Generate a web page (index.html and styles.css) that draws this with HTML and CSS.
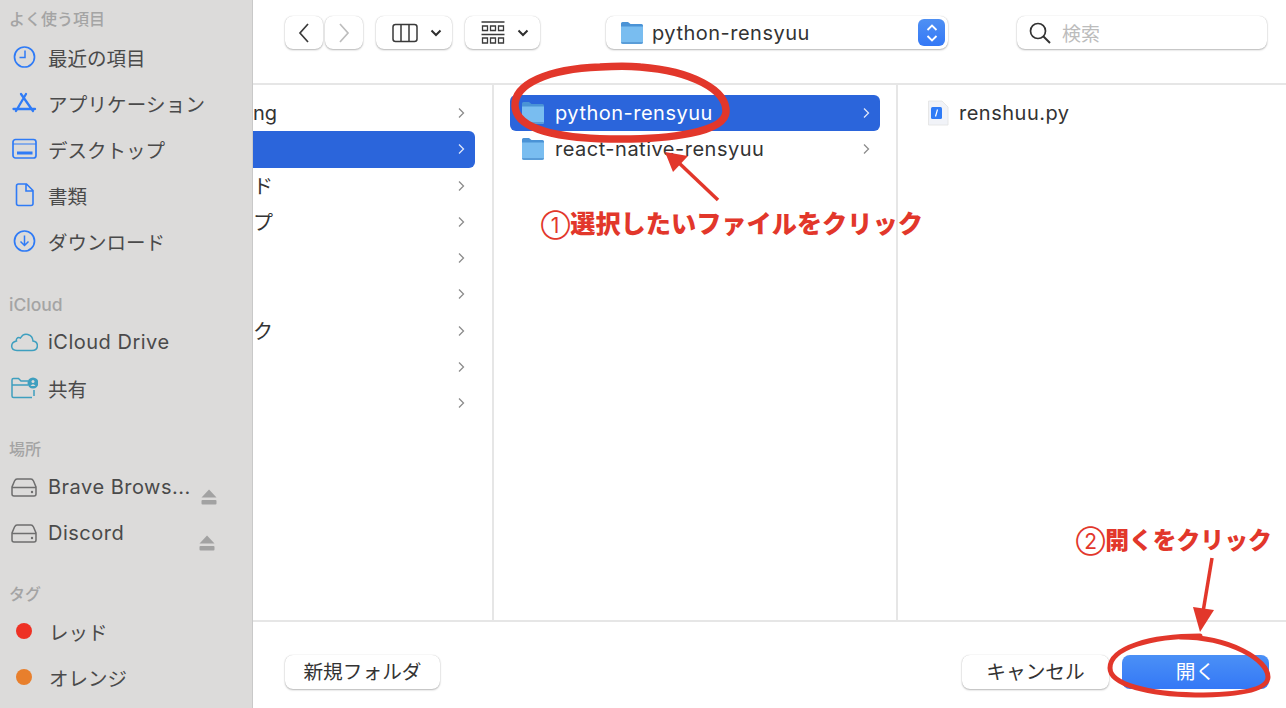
FILE: index.html
```html
<!DOCTYPE html>
<html lang="ja">

<head>
    <meta charset="UTF-8">
    <title>python-rensyuu</title>
    <link rel="stylesheet" href="styles.css">
</head>

<body>
    <svg class="icon-defs" width="0" height="0">
        <defs>
            <symbol id="folder" viewBox="0 0 24 24">
                <path d="M1 2.500 Q1 1 2.500 1 H8 L10.500 3 H21.500 Q23 3 23 4.500 V8 H1 Z" fill="#4a93d6" />
                <path d="M1 5.500 H23 V21 Q23 23 21 23 H3 Q1 23 1 21 Z" fill="#79bdf0" />
                <path d="M1 21 H23 Q23 23 21 23 H3 Q1 23 1 21 Z" fill="#5a9dd8" />
            </symbol>
            <symbol id="chevron" viewBox="0 0 10 14">
                <path d="M3 2.500 L7.500 7 L3 11.500" fill="none" stroke="currentColor" stroke-width="1.300" />
            </symbol>
            <symbol id="drive" viewBox="0 0 28 24">
                <path d="M7 4 H21 Q22.500 4 23.500 6 L26 12 V19 Q26 21 24 21 H4 Q2 21 2 19 V12 L4.500 6 Q5.500 4 7 4 Z M2 12.500 H26" fill="none" stroke="#6e6e6e" stroke-width="1.500" />
                <circle cx="22" cy="17" r="1.200" fill="#6e6e6e" />
            </symbol>
            <symbol id="eject" viewBox="0 0 16 16">
                <path d="M8 0.500 L15.500 8.500 H0.500 Z" fill="#a2a2a2" />
                <rect x="0.500" y="11" width="15" height="4.500" rx="1" fill="#a2a2a2" />
            </symbol>
        </defs>
    </svg>

    <div class="dialog">
        <aside class="sidebar">
            <section class="side-section side-favorites">
                <h2 class="side-title">よく使う項目</h2>
                <div class="side-item">
                    <svg class="side-icon" viewBox="0 0 28 24">
                        <circle cx="14.500" cy="12" r="10" fill="none" stroke="#2f7bf6" stroke-width="1.700" />
                        <path d="M15 5.500 V12.500 H9.500" fill="none" stroke="#2f7bf6" stroke-width="1.500" />
                    </svg>
                    <span>最近の項目</span>
                </div>
                <div class="side-item">
                    <svg class="side-icon" viewBox="0 0 28 24">
                        <path d="M16 3 L6 20 M11 3 L23 20 M3.500 18 H25" fill="none" stroke="#2f7bf6" stroke-width="2.300" stroke-linecap="round" />
                    </svg>
                    <span class="side-kana">アプリケーション</span>
                </div>
                <div class="side-item">
                    <svg class="side-icon" viewBox="0 0 28 24">
                        <rect x="3" y="2.500" width="23" height="18.500" rx="2.500" fill="none" stroke="#2f7bf6" stroke-width="1.700" />
                        <path d="M3 7 H26" stroke="#2f7bf6" stroke-width="1" />
                        <rect x="7" y="14.500" width="15.500" height="3" fill="#2f7bf6" />
                    </svg>
                    <span>デスクトップ</span>
                </div>
                <div class="side-item">
                    <svg class="side-icon" viewBox="0 0 28 24">
                        <path d="M8.500 1 H16.500 L23 7.500 V20.500 Q23 22.500 21 22.500 H8.500 Q6.500 22.500 6.500 20.500 V3 Q6.500 1 8.500 1 Z M16 1 V8 H23" fill="none" stroke="#2f7bf6" stroke-width="1.600" />
                    </svg>
                    <span>書類</span>
                </div>
                <div class="side-item">
                    <svg class="side-icon" viewBox="0 0 28 24">
                        <circle cx="14.500" cy="12" r="10" fill="none" stroke="#2f7bf6" stroke-width="1.700" />
                        <path d="M14.500 6.500 V16.500 M10.500 12.500 L14.500 16.500 L18.500 12.500" fill="none" stroke="#2f7bf6" stroke-width="1.500" />
                    </svg>
                    <span>ダウンロード</span>
                </div>
            </section>

            <section class="side-section side-tight">
                <h2 class="side-title title-latin">iCloud</h2>
                <div class="side-item">
                    <svg class="side-icon" viewBox="0 0 28 24">
                        <path d="M7 20.500 H22 C29 20.500 29 12 23 11 C22.500 4 14 1.500 10.500 8 C7 6.500 6 9.500 6.500 11 C0 12.500 0 20.500 7 20.500 Z" fill="none" stroke="#3e9fbf" stroke-width="1.500" />
                    </svg>
                    <span class="latin">iCloud Drive</span>
                </div>
                <div class="side-item">
                    <svg class="side-icon" viewBox="0 0 28 24">
                        <path d="M22 21.500 H3.500 Q2 21.500 2 20 V4 Q2 2.500 3.500 2.500 H8.500 L11 5 H18 M2 9 H18 M24 14 V20" fill="none" stroke="#3e9fbf" stroke-width="1.500" />
                        <circle cx="23" cy="7" r="5.500" fill="#3e9fbf" />
                        <circle cx="23" cy="5.500" r="1.500" fill="#dcdbda" />
                        <path d="M20.500 10 Q23 6.500 25.500 10 Z" fill="#dcdbda" />
                    </svg>
                    <span>共有</span>
                </div>
            </section>

            <section class="side-section">
                <h2 class="side-title">場所</h2>
                <div class="side-item">
                    <svg class="side-icon"><use href="#drive" /></svg>
                    <span class="latin">Brave Brows...</span>
                    <svg class="eject"><use href="#eject" /></svg>
                </div>
                <div class="side-item">
                    <svg class="side-icon"><use href="#drive" /></svg>
                    <span class="latin">Discord</span>
                    <svg class="eject"><use href="#eject" /></svg>
                </div>
            </section>

            <section class="side-section side-tight">
                <h2 class="side-title">タグ</h2>
                <div class="side-item">
                    <span class="tag-dot tag-red"></span>
                    <span>レッド</span>
                </div>
                <div class="side-item">
                    <span class="tag-dot tag-orange"></span>
                    <span>オレンジ</span>
                </div>
            </section>
        </aside>

        <main class="main">
            <div class="toolbar">
                <div class="nav-buttons">
                    <button class="tool-btn nav-btn">
                        <svg width="14" height="24" viewBox="0 0 14 24"><path d="M11 3 L3 12 L11 21" fill="none" stroke="#3a3a3a" stroke-width="1.700" /></svg>
                    </button>
                    <button class="tool-btn nav-btn">
                        <svg width="14" height="24" viewBox="0 0 14 24"><path d="M3 3 L11 12 L3 21" fill="none" stroke="#bdbdbd" stroke-width="1.700" /></svg>
                    </button>
                </div>
                <button class="tool-btn view-btn view-columns">
                    <svg width="26" height="20" viewBox="0 0 26 20">
                        <rect x="1" y="1.500" width="24" height="17" rx="2.500" fill="none" stroke="#3a3a3a" stroke-width="1.500" />
                        <path d="M9 1.500 V18.500 M17 1.500 V18.500" stroke="#3a3a3a" stroke-width="1.500" />
                    </svg>
                    <svg class="caret" width="12" height="8" viewBox="0 0 12 8"><path d="M1.500 1.500 L6 6 L10.500 1.500" fill="none" stroke="#2e2e2e" stroke-width="2" /></svg>
                </button>
                <button class="tool-btn view-btn view-group">
                    <svg width="24" height="23" viewBox="0 0 24 23">
                        <path d="M0.500 1 H23.500 M0.500 13.500 H23.500" stroke="#3a3a3a" stroke-width="1.300" />
                        <path d="M1.500 5 h5 v4.500 h-5 Z M9.500 5 h5 v4.500 h-5 Z M17.500 5 h5 v4.500 h-5 Z M1.500 17 h5 v5 h-5 Z M9.500 17 h5 v5 h-5 Z M17.500 17 h5 v5 h-5 Z" fill="none" stroke="#3a3a3a" stroke-width="1.300" />
                    </svg>
                    <svg class="caret" width="12" height="8" viewBox="0 0 12 8"><path d="M1.500 1.500 L6 6 L10.500 1.500" fill="none" stroke="#2e2e2e" stroke-width="2" /></svg>
                </button>
                <div class="tool-btn path-popup">
                    <svg class="row-icon"><use href="#folder" /></svg>
                    <span class="path-name">python-rensyuu</span>
                    <span class="stepper">
                        <svg width="14" height="24" viewBox="0 0 14 24">
                            <path d="M2.500 9 L7 4.500 L11.500 9 M2.500 15 L7 19.500 L11.500 15" fill="none" stroke="#fff" stroke-width="1.800" />
                        </svg>
                    </span>
                </div>
                <div class="tool-btn search-box">
                    <svg width="24" height="24" viewBox="0 0 24 24">
                        <circle cx="10" cy="10" r="7.500" fill="none" stroke="#333" stroke-width="1.700" />
                        <path d="M15.500 15.500 L22 22" stroke="#333" stroke-width="2" />
                    </svg>
                    <span>検索</span>
                </div>
            </div>

            <div class="browser">
                <div class="column column-first">
                    <div class="row"><span class="row-label">ng</span><svg class="chevron"><use href="#chevron" /></svg></div>
                    <div class="row row-selected"><span class="row-label"></span><svg class="chevron"><use href="#chevron" /></svg></div>
                    <div class="row"><span class="row-label">ド</span><svg class="chevron"><use href="#chevron" /></svg></div>
                    <div class="row"><span class="row-label">プ</span><svg class="chevron"><use href="#chevron" /></svg></div>
                    <div class="row"><span class="row-label"></span><svg class="chevron"><use href="#chevron" /></svg></div>
                    <div class="row"><span class="row-label"></span><svg class="chevron"><use href="#chevron" /></svg></div>
                    <div class="row"><span class="row-label">ク</span><svg class="chevron"><use href="#chevron" /></svg></div>
                    <div class="row"><span class="row-label"></span><svg class="chevron"><use href="#chevron" /></svg></div>
                    <div class="row"><span class="row-label"></span><svg class="chevron"><use href="#chevron" /></svg></div>
                </div>
                <div class="column column-second">
                    <div class="row row-selected">
                        <svg class="row-icon"><use href="#folder" /></svg>
                        <span class="row-label latin">python-rensyuu</span>
                        <svg class="chevron"><use href="#chevron" /></svg>
                    </div>
                    <div class="row">
                        <svg class="row-icon"><use href="#folder" /></svg>
                        <span class="row-label latin">react-native-rensyuu</span>
                        <svg class="chevron"><use href="#chevron" /></svg>
                    </div>
                </div>
                <div class="column column-third">
                    <div class="row">
                        <svg class="file-icon" width="22" height="26" viewBox="0 0 22 26">
                            <path d="M1.500 1 H15 L21 7 V25 H1.500 Z" fill="#f1f3f8" stroke="#e2e2e2" stroke-width="0.800" />
                            <rect x="4" y="7" width="11" height="12" rx="1.500" fill="#2f7bf6" />
                            <path d="M10.500 9.500 L8.500 16.500" stroke="#fff" stroke-width="1.200" />
                        </svg>
                        <span class="row-label latin">renshuu.py</span>
                    </div>
                </div>
            </div>

            <div class="footer">
                <button class="tool-btn foot-btn new-folder">新規フォルダ</button>
                <div class="foot-right">
                    <button class="tool-btn foot-btn">キャンセル</button>
                    <button class="foot-btn open-btn">開く</button>
                </div>
            </div>
        </main>
    </div>

    <!-- red notes drawn over the dialog -->
    <svg class="marks" viewBox="0 0 1286 708">
        <path d="M640 67 C692 71 727 90 726 112 C725 132 670 140 610 139 C560 138 516 130 515 106 C514 84 548 69 600 67 C615 66 630 66 640 67" fill="none" stroke="#e2372b" stroke-width="7.500" stroke-linecap="round" />
        <path d="M718 200 L678 162" fill="none" stroke="#e2372b" stroke-width="3.500" />
        <path d="M665 152 L688 156 L673 172 Z" fill="#e2372b" />
        <path d="M1180 637 C1230 637 1268 660 1268 677 C1268 692 1230 695 1195 695 C1150 694 1110 685 1110 668 C1110 648 1150 636 1200 636" fill="none" stroke="#e2372b" stroke-width="5" stroke-linecap="round" />
        <path d="M1212 558 L1203 612" fill="none" stroke="#e2372b" stroke-width="3.500" />
        <path d="M1200 632 L1193 607 L1214 610 Z" fill="#e2372b" />
    </svg>
    <div class="note note-first"><span class="note-num">①</span>選択したいファイルをクリック</div>
    <div class="note note-second"><span class="note-num">②</span>開くをクリック</div>
</body>

</html>
```

FILE: styles.css
```css
* {
    box-sizing: border-box;
}

html,
body {
    margin: 0;
    height: 708px;
    overflow: hidden;
}

body {
    position: relative;
    font-family: Inter, "Noto Sans CJK JP", sans-serif;
    background-color: #fff;
    color: #333;
}

.icon-defs {
    position: absolute;
}

.latin {
    font-size: 20px;
    letter-spacing: 0.5px;
}

.dialog {
    display: flex;
    height: 708px;
}

/* sidebar */
.sidebar {
    flex: 0 0 253px;
    padding-top: 5px;
    background-color: #dcdbda;
    border-right: 1px solid #c9c9c9;
    overflow: hidden;
}

.side-section {
    margin-bottom: 24px;
}

.side-favorites {
    margin-bottom: 27px;
}

.side-title {
    margin: 0 0 1px 9px;
    height: 28px;
    line-height: 28px;
    font-size: 16px;
    font-weight: 500;
    color: #a4a4a4;
}

.title-latin {
    font-size: 17.5px;
}

.side-tight .side-title {
    margin-bottom: 0;
}

.side-item {
    display: flex;
    align-items: center;
    gap: 10px;
    height: 46px;
    padding: 0 37px 0 10px;
    font-size: 19.5px;
    color: #4a4a4a;
    white-space: nowrap;
}

.side-kana {
    letter-spacing: 0.2px;
}

.side-icon {
    flex: 0 0 28px;
    width: 28px;
    height: 24px;
}

.eject {
    flex: 0 0 16px;
    width: 16px;
    height: 16px;
    margin-top: 20px;
    margin-left: auto;
}

.tag-dot {
    width: 16px;
    height: 16px;
    margin: 0 7px 0 6px;
    border-radius: 50%;
}

.tag-red {
    background-color: #ee3124;
}

.tag-orange {
    background-color: #e87f2c;
}

/* main part */
.main {
    flex: 1;
    display: flex;
    flex-direction: column;
    min-width: 0;
}

.toolbar {
    display: flex;
    align-items: flex-start;
    height: 85px;
    padding: 16px 19px 0 32px;
    border-bottom: 2px solid #e6e6e6;
}

.tool-btn {
    display: flex;
    align-items: center;
    justify-content: center;
    height: 33px;
    padding: 0;
    border: 0;
    border-radius: 8px;
    background-color: #fff;
    box-shadow: 0 1px 2px rgba(0, 0, 0, 0.28), 0 0 1px rgba(0, 0, 0, 0.2);
    font-family: inherit;
}

.nav-buttons {
    display: flex;
    gap: 2px;
}

.nav-btn {
    width: 38px;
}

.view-btn {
    justify-content: flex-start;
    gap: 12px;
    margin-left: 13px;
    padding-left: 16px;
}

.view-columns {
    width: 76px;
}

.view-group {
    width: 75px;
}

.path-popup {
    justify-content: flex-start;
    width: 342px;
    margin-left: 66px;
    padding: 0 3px 0 14px;
}

.path-name {
    flex: 1;
    margin-left: 8px;
    font-size: 20px;
    letter-spacing: 0.5px;
    color: #333;
}

.stepper {
    display: flex;
    align-items: center;
    justify-content: center;
    width: 27px;
    height: 27px;
    border-radius: 6px;
    background-image: linear-gradient(#4f90f3, #3478f6);
}

.search-box {
    justify-content: flex-start;
    gap: 10px;
    width: 250px;
    margin-left: 69px;
    padding-left: 11px;
    font-size: 19px;
    color: #bcbcbc;
}

/* file columns */
.browser {
    flex: 1;
    display: flex;
    min-height: 0;
}

.column {
    padding-top: 10px;
    border-right: 2px solid #e6e6e6;
}

.column-first {
    flex: 0 0 241px;
    padding-right: 17px;
}

.column-second {
    flex: 0 0 404px;
    padding: 10px 16px 0;
}

.column-third {
    flex: 1;
    padding-left: 29px;
    border-right: 0;
}

.row {
    display: flex;
    align-items: center;
    height: 36.25px;
    font-size: 20px;
    color: #333;
}

.column-first .row {
    padding-right: 9px;
}

.column-second .row {
    padding: 0 9px 0 11px;
}

.row-selected {
    border-radius: 0 6px 6px 0;
    background-color: #2b65db;
    color: #fff;
}

.column-second .row-selected {
    border-radius: 6px;
}

.row-label {
    flex: 1;
    white-space: nowrap;
    overflow: hidden;
}

.row-icon {
    flex: 0 0 24px;
    width: 24px;
    height: 24px;
    margin-right: 10px;
}

.path-popup .row-icon {
    margin-right: 0;
}

.file-icon {
    flex: 0 0 22px;
    margin-right: 10px;
}

.chevron {
    width: 10px;
    height: 14px;
    color: #8c8c8c;
}

.row-selected .chevron {
    color: #dfe7fa;
}

.footer {
    display: flex;
    align-items: center;
    justify-content: space-between;
    height: 88px;
    padding: 14px 17px 0 32px;
    border-top: 2px solid #e6e6e6;
}

.foot-right {
    display: flex;
    gap: 13px;
}

.foot-btn {
    width: 147px;
    height: 34px;
    padding-bottom: 4px;
    font-size: 19.7px;
    color: #333;
}

.new-folder {
    width: 155px;
}

.open-btn {
    border: 0;
    border-radius: 8px;
    font-family: inherit;
    color: #fff;
    background-image: linear-gradient(#4b90f6, #3478f6);
}

/* red notes */
.marks {
    position: absolute;
    left: 0;
    top: 0;
    width: 1286px;
    height: 708px;
    pointer-events: none;
}

.note {
    position: absolute;
    font-size: 25.2px;
    font-weight: 900;
    line-height: 30px;
    color: #e2372b;
    white-space: nowrap;
}

.note-num {
    font-size: 21px;
    font-weight: 400;
}

.note-first {
    left: 541px;
    top: 209px;
}

.note-second {
    left: 1076px;
    top: 526px;
    font-size: 23.8px;
}
```
